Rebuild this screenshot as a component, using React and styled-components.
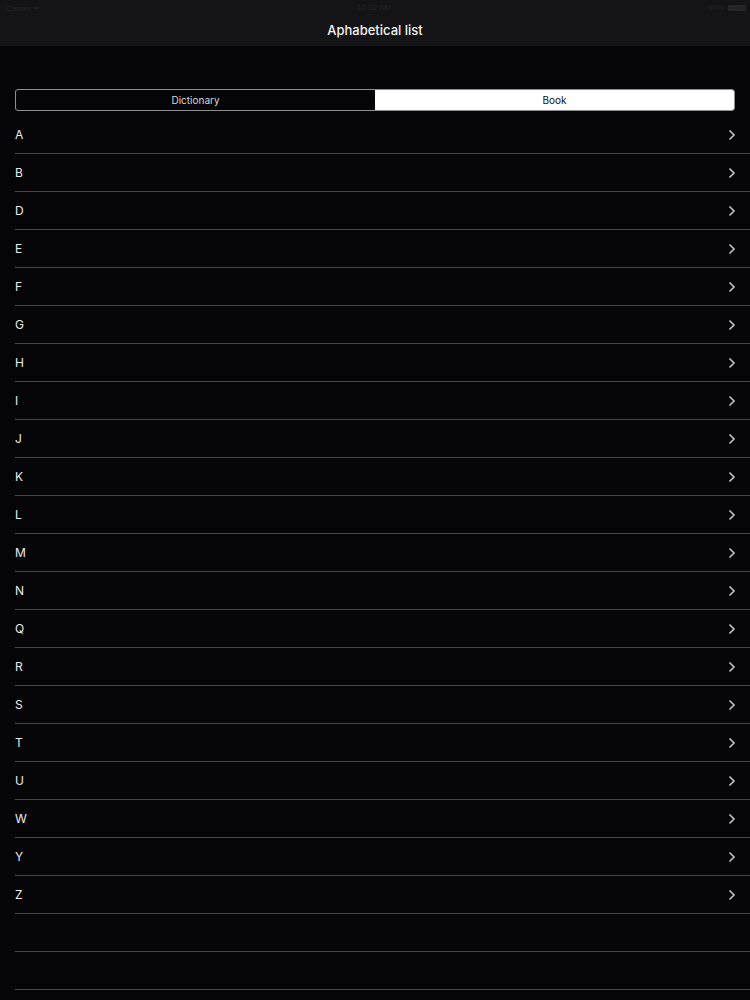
import React, { useState } from "react";
import styled, { createGlobalStyle } from "styled-components";

const letters = ["A", "B", "D", "E", "F", "G", "H", "I", "J", "K", "L", "M", "N", "Q", "R", "S", "T", "U", "W", "Y", "Z"];

const GlobalStyle = createGlobalStyle`
  html, body {
    margin: 0;
    padding: 0;
    background: #050406;
    font-family: "Liberation Sans", Arial, sans-serif;
  }
`;

const Chevron = () => (
  <svg width="8" height="12" viewBox="0 0 8 12">
    <path d="M1.5 1.5 L6 6 L1.5 10.5" fill="none" stroke="#c4c4c4" strokeWidth="1.6" />
  </svg>
);

const App = () => {
  const [tab, setTab] = useState("book");

  return (
    <Page>
      <GlobalStyle />
      <Header>
        <StatusBar>
          <span>Carrier ᯤ</span>
          <span>10:32 AM</span>
          <Battery>
            90% <BatteryIcon />
          </Battery>
        </StatusBar>
        <Title>Aphabetical list</Title>
      </Header>
      <Content>
        <Segmented>
          <Segment active={tab === "dictionary"} onClick={() => setTab("dictionary")}>
            Dictionary
          </Segment>
          <Segment active={tab === "book"} onClick={() => setTab("book")}>
            Book
          </Segment>
        </Segmented>
        <List>
          {letters.map((l) => (
            <Row key={l}>
              <span>{l}</span>
              <Chevron />
            </Row>
          ))}
          <Row />
          <Row />
        </List>
      </Content>
    </Page>
  );
};

export default App;

const Page = styled.div`
  width: 750px;
  min-height: 1000px;
  background: #050406;
  overflow: hidden;
`;

const Header = styled.div`
  background: #141316;
  height: 46px;
`;

const StatusBar = styled.div`
  height: 15px;
  display: flex;
  justify-content: space-between;
  align-items: center;
  padding: 0 4px 0 6px;
  font-size: 8px;
  color: #252428;
`;

const Battery = styled.span`
  display: flex;
  align-items: center;
  gap: 4px;
`;

const BatteryIcon = styled.span`
  display: inline-block;
  width: 18px;
  height: 6px;
  background: #252428;
  border-radius: 1px;
`;

const Title = styled.div`
  height: 31px;
  display: flex;
  align-items: center;
  justify-content: center;
  color: #f2f2f2;
  font-size: 13px;
  font-weight: 500;
  font-family: "Inter", "Liberation Sans", sans-serif;
  padding-bottom: 1px;
  box-sizing: border-box;
`;

const Content = styled.div`
  padding: 43px 0 0 15px;
`;

const Segmented = styled.div`
  display: flex;
  width: 720px;
  height: 22px;
  border: 1px solid #8e8e90;
  border-radius: 3px;
  box-sizing: border-box;
  overflow: hidden;
  margin-bottom: 5px;
`;

const Segment = styled.div`
  flex: 1;
  display: flex;
  align-items: center;
  justify-content: center;
  font-size: 10px;
  font-family: "Inter", "Liberation Sans", sans-serif;
  cursor: pointer;
  background: ${(p) => (p.active ? "#ffffff" : "transparent")};
  color: ${(p) => (p.active ? "#111" : "#dadada")};
`;

const List = styled.div`
  display: flex;
  flex-direction: column;
`;

const Row = styled.div`
  height: 37px;
  border-bottom: 1px solid #454547;
  display: flex;
  align-items: center;
  justify-content: space-between;
  padding-right: 14px;
  color: #ececec;
  font-size: 12px;
  font-family: "Inter", "Liberation Sans", sans-serif;
`;
